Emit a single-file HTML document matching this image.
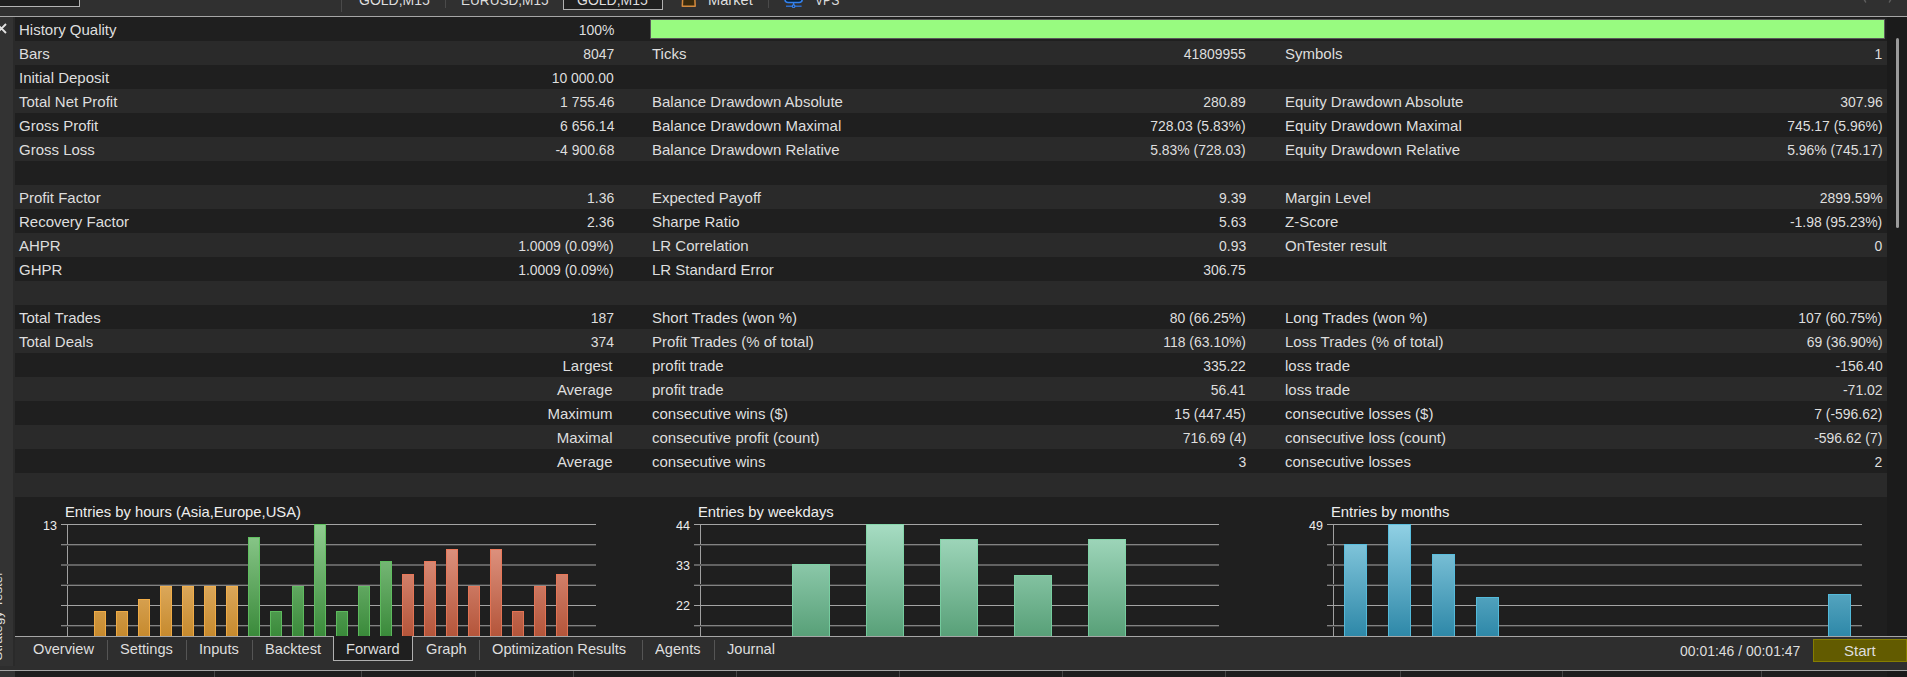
<!DOCTYPE html>
<html><head><meta charset="utf-8"><style>
html,body{margin:0;padding:0}
body{width:1907px;height:677px;overflow:hidden;position:relative;background:#1e1e1e;font-family:"Liberation Sans", sans-serif}
body>div,body>span,body>svg{position:absolute}
.t{white-space:nowrap;display:block}
</style></head><body>
<div style="left:0px;top:0px;width:1907px;height:16px;background:#303030;"></div>
<div style="left:0px;top:16px;width:1907px;height:1px;background:#a6a6a6;"></div>
<div style="left:0px;top:0px;width:79px;height:6px;background:#1f1f1f;border-right:1px solid #b4b4b4;border-bottom:1px solid #b4b4b4;"></div>
<div style="left:341px;top:0px;width:1px;height:12px;background:#4a4a4a;"></div>
<div style="left:445px;top:0px;width:1px;height:8px;background:#4a4a4a;"></div>
<div style="left:768px;top:0px;width:1px;height:8px;background:#4a4a4a;"></div>
<div style="left:563px;top:0px;width:100px;height:10px;background:#1f1f1f;box-sizing:border-box;border:1px solid #b0b0b0;border-top:none;"></div>
<div style="left:0px;top:17px;width:13px;height:649px;background:#333333;"></div>
<div style="left:13px;top:17px;width:2px;height:649px;background:#2a2a2a;"></div>
<div style="left:1887px;top:17px;width:20px;height:619px;background:#1b1b1b;"></div>
<div style="left:1896px;top:38px;width:3px;height:190px;background:#9a9a9a;border-radius:1.5px;"></div>
<div style="left:15px;top:17px;width:1872px;height:24px;background:#1f1f1f;"></div>
<div style="left:15px;top:41px;width:1872px;height:24px;background:#2a2a2a;"></div>
<div style="left:15px;top:65px;width:1872px;height:24px;background:#1f1f1f;"></div>
<div style="left:15px;top:89px;width:1872px;height:24px;background:#2a2a2a;"></div>
<div style="left:15px;top:113px;width:1872px;height:24px;background:#1f1f1f;"></div>
<div style="left:15px;top:137px;width:1872px;height:24px;background:#2a2a2a;"></div>
<div style="left:15px;top:161px;width:1872px;height:24px;background:#1f1f1f;"></div>
<div style="left:15px;top:185px;width:1872px;height:24px;background:#2a2a2a;"></div>
<div style="left:15px;top:209px;width:1872px;height:24px;background:#1f1f1f;"></div>
<div style="left:15px;top:233px;width:1872px;height:24px;background:#2a2a2a;"></div>
<div style="left:15px;top:257px;width:1872px;height:24px;background:#1f1f1f;"></div>
<div style="left:15px;top:281px;width:1872px;height:24px;background:#2a2a2a;"></div>
<div style="left:15px;top:305px;width:1872px;height:24px;background:#1f1f1f;"></div>
<div style="left:15px;top:329px;width:1872px;height:24px;background:#2a2a2a;"></div>
<div style="left:15px;top:353px;width:1872px;height:24px;background:#1f1f1f;"></div>
<div style="left:15px;top:377px;width:1872px;height:24px;background:#2a2a2a;"></div>
<div style="left:15px;top:401px;width:1872px;height:24px;background:#1f1f1f;"></div>
<div style="left:15px;top:425px;width:1872px;height:24px;background:#2a2a2a;"></div>
<div style="left:15px;top:449px;width:1872px;height:24px;background:#1f1f1f;"></div>
<div style="left:15px;top:473px;width:1872px;height:24px;background:#2a2a2a;"></div>
<div style="left:650px;top:19px;width:1235px;height:20px;background:#98fb80;box-sizing:border-box;border:1px solid #5a5a5a;"></div>
<span class="t" style="left:19px;top:19.80px;font-size:15px;line-height:20px;color:#dedede;">History Quality</span>
<span class="t" style="right:1293px;top:19.80px;font-size:15px;line-height:20px;color:#dedede;transform:scaleX(0.93);transform-origin:right center;">100%</span>
<span class="t" style="left:19px;top:43.80px;font-size:15px;line-height:20px;color:#dedede;">Bars</span>
<span class="t" style="right:1293px;top:43.80px;font-size:15px;line-height:20px;color:#dedede;transform:scaleX(0.93);transform-origin:right center;">8047</span>
<span class="t" style="left:652px;top:43.80px;font-size:15px;line-height:20px;color:#dedede;">Ticks</span>
<span class="t" style="right:661px;top:43.80px;font-size:15px;line-height:20px;color:#dedede;transform:scaleX(0.93);transform-origin:right center;">41809955</span>
<span class="t" style="left:1285px;top:43.80px;font-size:15px;line-height:20px;color:#dedede;">Symbols</span>
<span class="t" style="right:24.5px;top:43.80px;font-size:15px;line-height:20px;color:#dedede;transform:scaleX(0.93);transform-origin:right center;">1</span>
<span class="t" style="left:19px;top:67.80px;font-size:15px;line-height:20px;color:#dedede;">Initial Deposit</span>
<span class="t" style="right:1293px;top:67.80px;font-size:15px;line-height:20px;color:#dedede;transform:scaleX(0.93);transform-origin:right center;">10 000.00</span>
<span class="t" style="left:19px;top:91.80px;font-size:15px;line-height:20px;color:#dedede;">Total Net Profit</span>
<span class="t" style="right:1293px;top:91.80px;font-size:15px;line-height:20px;color:#dedede;transform:scaleX(0.93);transform-origin:right center;">1 755.46</span>
<span class="t" style="left:652px;top:91.80px;font-size:15px;line-height:20px;color:#dedede;">Balance Drawdown Absolute</span>
<span class="t" style="right:661px;top:91.80px;font-size:15px;line-height:20px;color:#dedede;transform:scaleX(0.93);transform-origin:right center;">280.89</span>
<span class="t" style="left:1285px;top:91.80px;font-size:15px;line-height:20px;color:#dedede;">Equity Drawdown Absolute</span>
<span class="t" style="right:24.5px;top:91.80px;font-size:15px;line-height:20px;color:#dedede;transform:scaleX(0.93);transform-origin:right center;">307.96</span>
<span class="t" style="left:19px;top:115.80px;font-size:15px;line-height:20px;color:#dedede;">Gross Profit</span>
<span class="t" style="right:1293px;top:115.80px;font-size:15px;line-height:20px;color:#dedede;transform:scaleX(0.93);transform-origin:right center;">6 656.14</span>
<span class="t" style="left:652px;top:115.80px;font-size:15px;line-height:20px;color:#dedede;">Balance Drawdown Maximal</span>
<span class="t" style="right:661px;top:115.80px;font-size:15px;line-height:20px;color:#dedede;transform:scaleX(0.93);transform-origin:right center;">728.03 (5.83%)</span>
<span class="t" style="left:1285px;top:115.80px;font-size:15px;line-height:20px;color:#dedede;">Equity Drawdown Maximal</span>
<span class="t" style="right:24.5px;top:115.80px;font-size:15px;line-height:20px;color:#dedede;transform:scaleX(0.93);transform-origin:right center;">745.17 (5.96%)</span>
<span class="t" style="left:19px;top:139.80px;font-size:15px;line-height:20px;color:#dedede;">Gross Loss</span>
<span class="t" style="right:1293px;top:139.80px;font-size:15px;line-height:20px;color:#dedede;transform:scaleX(0.93);transform-origin:right center;">-4 900.68</span>
<span class="t" style="left:652px;top:139.80px;font-size:15px;line-height:20px;color:#dedede;">Balance Drawdown Relative</span>
<span class="t" style="right:661px;top:139.80px;font-size:15px;line-height:20px;color:#dedede;transform:scaleX(0.93);transform-origin:right center;">5.83% (728.03)</span>
<span class="t" style="left:1285px;top:139.80px;font-size:15px;line-height:20px;color:#dedede;">Equity Drawdown Relative</span>
<span class="t" style="right:24.5px;top:139.80px;font-size:15px;line-height:20px;color:#dedede;transform:scaleX(0.93);transform-origin:right center;">5.96% (745.17)</span>
<span class="t" style="left:19px;top:187.80px;font-size:15px;line-height:20px;color:#dedede;">Profit Factor</span>
<span class="t" style="right:1293px;top:187.80px;font-size:15px;line-height:20px;color:#dedede;transform:scaleX(0.93);transform-origin:right center;">1.36</span>
<span class="t" style="left:652px;top:187.80px;font-size:15px;line-height:20px;color:#dedede;">Expected Payoff</span>
<span class="t" style="right:661px;top:187.80px;font-size:15px;line-height:20px;color:#dedede;transform:scaleX(0.93);transform-origin:right center;">9.39</span>
<span class="t" style="left:1285px;top:187.80px;font-size:15px;line-height:20px;color:#dedede;">Margin Level</span>
<span class="t" style="right:24.5px;top:187.80px;font-size:15px;line-height:20px;color:#dedede;transform:scaleX(0.93);transform-origin:right center;">2899.59%</span>
<span class="t" style="left:19px;top:211.80px;font-size:15px;line-height:20px;color:#dedede;">Recovery Factor</span>
<span class="t" style="right:1293px;top:211.80px;font-size:15px;line-height:20px;color:#dedede;transform:scaleX(0.93);transform-origin:right center;">2.36</span>
<span class="t" style="left:652px;top:211.80px;font-size:15px;line-height:20px;color:#dedede;">Sharpe Ratio</span>
<span class="t" style="right:661px;top:211.80px;font-size:15px;line-height:20px;color:#dedede;transform:scaleX(0.93);transform-origin:right center;">5.63</span>
<span class="t" style="left:1285px;top:211.80px;font-size:15px;line-height:20px;color:#dedede;">Z-Score</span>
<span class="t" style="right:24.5px;top:211.80px;font-size:15px;line-height:20px;color:#dedede;transform:scaleX(0.93);transform-origin:right center;">-1.98 (95.23%)</span>
<span class="t" style="left:19px;top:235.80px;font-size:15px;line-height:20px;color:#dedede;">AHPR</span>
<span class="t" style="right:1293px;top:235.80px;font-size:15px;line-height:20px;color:#dedede;transform:scaleX(0.93);transform-origin:right center;">1.0009 (0.09%)</span>
<span class="t" style="left:652px;top:235.80px;font-size:15px;line-height:20px;color:#dedede;">LR Correlation</span>
<span class="t" style="right:661px;top:235.80px;font-size:15px;line-height:20px;color:#dedede;transform:scaleX(0.93);transform-origin:right center;">0.93</span>
<span class="t" style="left:1285px;top:235.80px;font-size:15px;line-height:20px;color:#dedede;">OnTester result</span>
<span class="t" style="right:24.5px;top:235.80px;font-size:15px;line-height:20px;color:#dedede;transform:scaleX(0.93);transform-origin:right center;">0</span>
<span class="t" style="left:19px;top:259.80px;font-size:15px;line-height:20px;color:#dedede;">GHPR</span>
<span class="t" style="right:1293px;top:259.80px;font-size:15px;line-height:20px;color:#dedede;transform:scaleX(0.93);transform-origin:right center;">1.0009 (0.09%)</span>
<span class="t" style="left:652px;top:259.80px;font-size:15px;line-height:20px;color:#dedede;">LR Standard Error</span>
<span class="t" style="right:661px;top:259.80px;font-size:15px;line-height:20px;color:#dedede;transform:scaleX(0.93);transform-origin:right center;">306.75</span>
<span class="t" style="left:19px;top:307.80px;font-size:15px;line-height:20px;color:#dedede;">Total Trades</span>
<span class="t" style="right:1293px;top:307.80px;font-size:15px;line-height:20px;color:#dedede;transform:scaleX(0.93);transform-origin:right center;">187</span>
<span class="t" style="left:652px;top:307.80px;font-size:15px;line-height:20px;color:#dedede;">Short Trades (won %)</span>
<span class="t" style="right:661px;top:307.80px;font-size:15px;line-height:20px;color:#dedede;transform:scaleX(0.93);transform-origin:right center;">80 (66.25%)</span>
<span class="t" style="left:1285px;top:307.80px;font-size:15px;line-height:20px;color:#dedede;">Long Trades (won %)</span>
<span class="t" style="right:24.5px;top:307.80px;font-size:15px;line-height:20px;color:#dedede;transform:scaleX(0.93);transform-origin:right center;">107 (60.75%)</span>
<span class="t" style="left:19px;top:331.80px;font-size:15px;line-height:20px;color:#dedede;">Total Deals</span>
<span class="t" style="right:1293px;top:331.80px;font-size:15px;line-height:20px;color:#dedede;transform:scaleX(0.93);transform-origin:right center;">374</span>
<span class="t" style="left:652px;top:331.80px;font-size:15px;line-height:20px;color:#dedede;">Profit Trades (% of total)</span>
<span class="t" style="right:661px;top:331.80px;font-size:15px;line-height:20px;color:#dedede;transform:scaleX(0.93);transform-origin:right center;">118 (63.10%)</span>
<span class="t" style="left:1285px;top:331.80px;font-size:15px;line-height:20px;color:#dedede;">Loss Trades (% of total)</span>
<span class="t" style="right:24.5px;top:331.80px;font-size:15px;line-height:20px;color:#dedede;transform:scaleX(0.93);transform-origin:right center;">69 (36.90%)</span>
<span class="t" style="right:1294.5px;top:355.80px;font-size:15px;line-height:20px;color:#dedede;">Largest</span>
<span class="t" style="left:652px;top:355.80px;font-size:15px;line-height:20px;color:#dedede;">profit trade</span>
<span class="t" style="right:661px;top:355.80px;font-size:15px;line-height:20px;color:#dedede;transform:scaleX(0.93);transform-origin:right center;">335.22</span>
<span class="t" style="left:1285px;top:355.80px;font-size:15px;line-height:20px;color:#dedede;">loss trade</span>
<span class="t" style="right:24.5px;top:355.80px;font-size:15px;line-height:20px;color:#dedede;transform:scaleX(0.93);transform-origin:right center;">-156.40</span>
<span class="t" style="right:1294.5px;top:379.80px;font-size:15px;line-height:20px;color:#dedede;">Average</span>
<span class="t" style="left:652px;top:379.80px;font-size:15px;line-height:20px;color:#dedede;">profit trade</span>
<span class="t" style="right:661px;top:379.80px;font-size:15px;line-height:20px;color:#dedede;transform:scaleX(0.93);transform-origin:right center;">56.41</span>
<span class="t" style="left:1285px;top:379.80px;font-size:15px;line-height:20px;color:#dedede;">loss trade</span>
<span class="t" style="right:24.5px;top:379.80px;font-size:15px;line-height:20px;color:#dedede;transform:scaleX(0.93);transform-origin:right center;">-71.02</span>
<span class="t" style="right:1294.5px;top:403.80px;font-size:15px;line-height:20px;color:#dedede;">Maximum</span>
<span class="t" style="left:652px;top:403.80px;font-size:15px;line-height:20px;color:#dedede;">consecutive wins ($)</span>
<span class="t" style="right:661px;top:403.80px;font-size:15px;line-height:20px;color:#dedede;transform:scaleX(0.93);transform-origin:right center;">15 (447.45)</span>
<span class="t" style="left:1285px;top:403.80px;font-size:15px;line-height:20px;color:#dedede;">consecutive losses ($)</span>
<span class="t" style="right:24.5px;top:403.80px;font-size:15px;line-height:20px;color:#dedede;transform:scaleX(0.93);transform-origin:right center;">7 (-596.62)</span>
<span class="t" style="right:1294.5px;top:427.80px;font-size:15px;line-height:20px;color:#dedede;">Maximal</span>
<span class="t" style="left:652px;top:427.80px;font-size:15px;line-height:20px;color:#dedede;">consecutive profit (count)</span>
<span class="t" style="right:661px;top:427.80px;font-size:15px;line-height:20px;color:#dedede;transform:scaleX(0.93);transform-origin:right center;">716.69 (4)</span>
<span class="t" style="left:1285px;top:427.80px;font-size:15px;line-height:20px;color:#dedede;">consecutive loss (count)</span>
<span class="t" style="right:24.5px;top:427.80px;font-size:15px;line-height:20px;color:#dedede;transform:scaleX(0.93);transform-origin:right center;">-596.62 (7)</span>
<span class="t" style="right:1294.5px;top:451.80px;font-size:15px;line-height:20px;color:#dedede;">Average</span>
<span class="t" style="left:652px;top:451.80px;font-size:15px;line-height:20px;color:#dedede;">consecutive wins</span>
<span class="t" style="right:661px;top:451.80px;font-size:15px;line-height:20px;color:#dedede;transform:scaleX(0.93);transform-origin:right center;">3</span>
<span class="t" style="left:1285px;top:451.80px;font-size:15px;line-height:20px;color:#dedede;">consecutive losses</span>
<span class="t" style="right:24.5px;top:451.80px;font-size:15px;line-height:20px;color:#dedede;transform:scaleX(0.93);transform-origin:right center;">2</span>
<div style="left:15px;top:497px;width:1872px;height:139px;background:#1f1f1f;"></div>
<div style="left:67px;top:524px;width:1px;height:112px;background:#a0a0a0"></div>
<div style="left:61px;top:524px;width:535px;height:1px;background:#a4a4a4;"></div>
<div style="left:61px;top:544px;width:535px;height:1px;background:#838383;"></div>
<div style="left:61px;top:545px;width:535px;height:1px;background:#404040;"></div>
<div style="left:61px;top:564px;width:535px;height:1px;background:#626262;"></div>
<div style="left:61px;top:565px;width:535px;height:1px;background:#626262;"></div>
<div style="left:61px;top:584px;width:535px;height:1px;background:#404040;"></div>
<div style="left:61px;top:585px;width:535px;height:1px;background:#838383;"></div>
<div style="left:61px;top:605px;width:535px;height:1px;background:#a4a4a4;"></div>
<div style="left:61px;top:625px;width:535px;height:1px;background:#838383;"></div>
<div style="left:61px;top:626px;width:535px;height:1px;background:#404040;"></div>
<span class="t" style="left:65px;top:501.87px;font-size:14.8px;line-height:20px;color:#eeeeee;">Entries by hours (Asia,Europe,USA)</span>
<span class="t" style="right:1850px;top:516.17px;font-size:12.5px;line-height:20px;color:#eeeeee;">13</span>
<div style="left:94px;top:611px;width:12px;height:25px;background:linear-gradient(#f0ac45,#eea840);"><div style="position:absolute;left:1px;top:1px;right:1px;bottom:0;background:linear-gradient(#d09843,#c68a2e)"></div></div>
<div style="left:116px;top:611px;width:12px;height:25px;background:linear-gradient(#f0ac45,#eea840);"><div style="position:absolute;left:1px;top:1px;right:1px;bottom:0;background:linear-gradient(#d09843,#c68a2e)"></div></div>
<div style="left:138px;top:599px;width:12px;height:37px;background:linear-gradient(#f1ad48,#eea840);"><div style="position:absolute;left:1px;top:1px;right:1px;bottom:0;background:linear-gradient(#d59f4e,#c68a2e)"></div></div>
<div style="left:160px;top:586px;width:12px;height:50px;background:linear-gradient(#f2af4b,#eea840);"><div style="position:absolute;left:1px;top:1px;right:1px;bottom:0;background:linear-gradient(#dba759,#c68a2e)"></div></div>
<div style="left:182px;top:586px;width:12px;height:50px;background:linear-gradient(#f2af4b,#eea840);"><div style="position:absolute;left:1px;top:1px;right:1px;bottom:0;background:linear-gradient(#dba759,#c68a2e)"></div></div>
<div style="left:204px;top:586px;width:12px;height:50px;background:linear-gradient(#f2af4b,#eea840);"><div style="position:absolute;left:1px;top:1px;right:1px;bottom:0;background:linear-gradient(#dba759,#c68a2e)"></div></div>
<div style="left:226px;top:586px;width:12px;height:50px;background:linear-gradient(#f2af4b,#eea840);"><div style="position:absolute;left:1px;top:1px;right:1px;bottom:0;background:linear-gradient(#dba759,#c68a2e)"></div></div>
<div style="left:248px;top:537px;width:12px;height:99px;background:linear-gradient(#61c161,#5cb85c);"><div style="position:absolute;left:1px;top:1px;right:1px;bottom:0;background:linear-gradient(#86c486,#3a8a3a)"></div></div>
<div style="left:270px;top:611px;width:12px;height:25px;background:linear-gradient(#5dba5d,#5cb85c);"><div style="position:absolute;left:1px;top:1px;right:1px;bottom:0;background:linear-gradient(#4d994d,#3a8a3a)"></div></div>
<div style="left:292px;top:586px;width:12px;height:50px;background:linear-gradient(#5fbc5f,#5cb85c);"><div style="position:absolute;left:1px;top:1px;right:1px;bottom:0;background:linear-gradient(#60a760,#3a8a3a)"></div></div>
<div style="left:314px;top:524px;width:12px;height:112px;background:linear-gradient(#62c262,#5cb85c);"><div style="position:absolute;left:1px;top:1px;right:1px;bottom:0;background:linear-gradient(#90cc90,#3a8a3a)"></div></div>
<div style="left:336px;top:611px;width:12px;height:25px;background:linear-gradient(#5dba5d,#5cb85c);"><div style="position:absolute;left:1px;top:1px;right:1px;bottom:0;background:linear-gradient(#4d994d,#3a8a3a)"></div></div>
<div style="left:358px;top:586px;width:12px;height:50px;background:linear-gradient(#5fbc5f,#5cb85c);"><div style="position:absolute;left:1px;top:1px;right:1px;bottom:0;background:linear-gradient(#60a760,#3a8a3a)"></div></div>
<div style="left:380px;top:561px;width:12px;height:75px;background:linear-gradient(#60bf60,#5cb85c);"><div style="position:absolute;left:1px;top:1px;right:1px;bottom:0;background:linear-gradient(#74b674,#3a8a3a)"></div></div>
<div style="left:402px;top:574px;width:12px;height:62px;background:linear-gradient(#e87758,#e07050);"><div style="position:absolute;left:1px;top:1px;right:1px;bottom:0;background:linear-gradient(#d17f69,#b4553a)"></div></div>
<div style="left:424px;top:561px;width:12px;height:75px;background:linear-gradient(#e97859,#e07050);"><div style="position:absolute;left:1px;top:1px;right:1px;bottom:0;background:linear-gradient(#d78873,#b4553a)"></div></div>
<div style="left:446px;top:549px;width:12px;height:87px;background:linear-gradient(#eb795b,#e07050);"><div style="position:absolute;left:1px;top:1px;right:1px;bottom:0;background:linear-gradient(#dc907c,#b4553a)"></div></div>
<div style="left:468px;top:586px;width:12px;height:50px;background:linear-gradient(#e67556,#e07050);"><div style="position:absolute;left:1px;top:1px;right:1px;bottom:0;background:linear-gradient(#cb7760,#b4553a)"></div></div>
<div style="left:490px;top:549px;width:12px;height:87px;background:linear-gradient(#eb795b,#e07050);"><div style="position:absolute;left:1px;top:1px;right:1px;bottom:0;background:linear-gradient(#dc907c,#b4553a)"></div></div>
<div style="left:512px;top:611px;width:12px;height:25px;background:linear-gradient(#e37353,#e07050);"><div style="position:absolute;left:1px;top:1px;right:1px;bottom:0;background:linear-gradient(#c0664d,#b4553a)"></div></div>
<div style="left:534px;top:586px;width:12px;height:50px;background:linear-gradient(#e67556,#e07050);"><div style="position:absolute;left:1px;top:1px;right:1px;bottom:0;background:linear-gradient(#cb7760,#b4553a)"></div></div>
<div style="left:556px;top:574px;width:12px;height:62px;background:linear-gradient(#e87758,#e07050);"><div style="position:absolute;left:1px;top:1px;right:1px;bottom:0;background:linear-gradient(#d17f69,#b4553a)"></div></div>
<div style="left:700px;top:524px;width:1px;height:112px;background:#a0a0a0"></div>
<div style="left:694px;top:524px;width:525px;height:1px;background:#a4a4a4;"></div>
<div style="left:694px;top:544px;width:525px;height:1px;background:#838383;"></div>
<div style="left:694px;top:545px;width:525px;height:1px;background:#404040;"></div>
<div style="left:694px;top:564px;width:525px;height:1px;background:#626262;"></div>
<div style="left:694px;top:565px;width:525px;height:1px;background:#626262;"></div>
<div style="left:694px;top:584px;width:525px;height:1px;background:#404040;"></div>
<div style="left:694px;top:585px;width:525px;height:1px;background:#838383;"></div>
<div style="left:694px;top:605px;width:525px;height:1px;background:#a4a4a4;"></div>
<div style="left:694px;top:625px;width:525px;height:1px;background:#838383;"></div>
<div style="left:694px;top:626px;width:525px;height:1px;background:#404040;"></div>
<span class="t" style="left:698px;top:501.87px;font-size:14.8px;line-height:20px;color:#eeeeee;">Entries by weekdays</span>
<span class="t" style="right:1217px;top:516.17px;font-size:12.5px;line-height:20px;color:#eeeeee;">44</span>
<span class="t" style="right:1217px;top:556.17px;font-size:12.5px;line-height:20px;color:#eeeeee;">33</span>
<span class="t" style="right:1217px;top:596.17px;font-size:12.5px;line-height:20px;color:#eeeeee;">22</span>
<div style="left:792px;top:564px;width:38px;height:72px;background:linear-gradient(#7ed2a6,#70c89a);"><div style="position:absolute;left:1px;top:1px;right:1px;bottom:0;background:linear-gradient(#8ac7a8,#58a078)"></div></div>
<div style="left:866px;top:524px;width:38px;height:112px;background:linear-gradient(#86d8ac,#70c89a);"><div style="position:absolute;left:1px;top:1px;right:1px;bottom:0;background:linear-gradient(#a6dcc2,#58a078)"></div></div>
<div style="left:940px;top:539px;width:38px;height:97px;background:linear-gradient(#83d6aa,#70c89a);"><div style="position:absolute;left:1px;top:1px;right:1px;bottom:0;background:linear-gradient(#9cd4b8,#58a078)"></div></div>
<div style="left:1014px;top:575px;width:38px;height:61px;background:linear-gradient(#7cd1a4,#70c89a);"><div style="position:absolute;left:1px;top:1px;right:1px;bottom:0;background:linear-gradient(#82c1a0,#58a078)"></div></div>
<div style="left:1088px;top:539px;width:38px;height:97px;background:linear-gradient(#83d6aa,#70c89a);"><div style="position:absolute;left:1px;top:1px;right:1px;bottom:0;background:linear-gradient(#9cd4b8,#58a078)"></div></div>
<div style="left:1333px;top:524px;width:1px;height:112px;background:#a0a0a0"></div>
<div style="left:1327px;top:524px;width:535px;height:1px;background:#a4a4a4;"></div>
<div style="left:1327px;top:544px;width:535px;height:1px;background:#838383;"></div>
<div style="left:1327px;top:545px;width:535px;height:1px;background:#404040;"></div>
<div style="left:1327px;top:564px;width:535px;height:1px;background:#626262;"></div>
<div style="left:1327px;top:565px;width:535px;height:1px;background:#626262;"></div>
<div style="left:1327px;top:584px;width:535px;height:1px;background:#404040;"></div>
<div style="left:1327px;top:585px;width:535px;height:1px;background:#838383;"></div>
<div style="left:1327px;top:605px;width:535px;height:1px;background:#a4a4a4;"></div>
<div style="left:1327px;top:625px;width:535px;height:1px;background:#838383;"></div>
<div style="left:1327px;top:626px;width:535px;height:1px;background:#404040;"></div>
<span class="t" style="left:1331px;top:501.87px;font-size:14.8px;line-height:20px;color:#eeeeee;">Entries by months</span>
<span class="t" style="right:584px;top:516.17px;font-size:12.5px;line-height:20px;color:#eeeeee;">49</span>
<div style="left:1344px;top:544px;width:23px;height:92px;background:linear-gradient(#5abfdf,#50b8d8);"><div style="position:absolute;left:1px;top:1px;right:1px;bottom:0;background:linear-gradient(#7ec3d9,#2e88a8)"></div></div>
<div style="left:1388px;top:524px;width:23px;height:112px;background:linear-gradient(#5cc0e0,#50b8d8);"><div style="position:absolute;left:1px;top:1px;right:1px;bottom:0;background:linear-gradient(#90d0e4,#2e88a8)"></div></div>
<div style="left:1432px;top:554px;width:23px;height:82px;background:linear-gradient(#59bede,#50b8d8);"><div style="position:absolute;left:1px;top:1px;right:1px;bottom:0;background:linear-gradient(#76bdd4,#2e88a8)"></div></div>
<div style="left:1476px;top:597px;width:23px;height:39px;background:linear-gradient(#54bbdb,#50b8d8);"><div style="position:absolute;left:1px;top:1px;right:1px;bottom:0;background:linear-gradient(#50a1bd,#2e88a8)"></div></div>
<div style="left:1828px;top:594px;width:23px;height:42px;background:linear-gradient(#54bbdb,#50b8d8);"><div style="position:absolute;left:1px;top:1px;right:1px;bottom:0;background:linear-gradient(#53a3be,#2e88a8)"></div></div>
<div style="left:15px;top:636px;width:1892px;height:1px;background:#a6a6a6;"></div>
<div style="left:15px;top:637px;width:1892px;height:33px;background:#2e2e2e;"></div>
<div style="left:0px;top:670px;width:1907px;height:1px;background:#a6a6a6;"></div>
<div style="left:0px;top:671px;width:1907px;height:6px;background:#1e1e1e;"></div>
<div style="left:0px;top:666px;width:15px;height:4px;background:#2e2e2e;"></div>
<div style="left:0px;top:671px;width:15px;height:6px;background:#333333;"></div>
<div style="left:214px;top:671px;width:1px;height:6px;background:#444444;"></div>
<div style="left:361px;top:671px;width:1px;height:6px;background:#444444;"></div>
<div style="left:475px;top:671px;width:1px;height:6px;background:#444444;"></div>
<div style="left:573px;top:671px;width:1px;height:6px;background:#444444;"></div>
<div style="left:736px;top:671px;width:1px;height:6px;background:#444444;"></div>
<div style="left:899px;top:671px;width:1px;height:6px;background:#444444;"></div>
<div style="left:1062px;top:671px;width:1px;height:6px;background:#444444;"></div>
<div style="left:1225px;top:671px;width:1px;height:6px;background:#444444;"></div>
<div style="left:1400px;top:671px;width:1px;height:6px;background:#444444;"></div>
<div style="left:1562px;top:671px;width:1px;height:6px;background:#444444;"></div>
<div style="left:1761px;top:671px;width:1px;height:6px;background:#444444;"></div>
<div style="left:333px;top:636px;width:80px;height:25px;background:#1f1f1f;box-sizing:border-box;border:1px solid #b0b0b0;border-top:none;"></div>
<div style="left:107px;top:640px;width:1px;height:20px;background:#555555;"></div>
<div style="left:186px;top:640px;width:1px;height:20px;background:#555555;"></div>
<div style="left:252px;top:640px;width:1px;height:20px;background:#555555;"></div>
<div style="left:479px;top:640px;width:1px;height:20px;background:#555555;"></div>
<div style="left:642px;top:640px;width:1px;height:20px;background:#555555;"></div>
<div style="left:714px;top:640px;width:1px;height:20px;background:#555555;"></div>
<span class="t" style="left:33px;top:638.80px;font-size:15px;line-height:20px;color:#dedede;transform:scaleX(0.975);transform-origin:left center;">Overview</span>
<span class="t" style="left:120px;top:638.80px;font-size:15px;line-height:20px;color:#dedede;transform:scaleX(0.975);transform-origin:left center;">Settings</span>
<span class="t" style="left:199px;top:638.80px;font-size:15px;line-height:20px;color:#dedede;transform:scaleX(0.975);transform-origin:left center;">Inputs</span>
<span class="t" style="left:265px;top:638.80px;font-size:15px;line-height:20px;color:#dedede;transform:scaleX(0.975);transform-origin:left center;">Backtest</span>
<span class="t" style="left:346px;top:638.80px;font-size:15px;line-height:20px;color:#dedede;transform:scaleX(0.975);transform-origin:left center;">Forward</span>
<span class="t" style="left:426px;top:638.80px;font-size:15px;line-height:20px;color:#dedede;transform:scaleX(0.975);transform-origin:left center;">Graph</span>
<span class="t" style="left:492px;top:638.80px;font-size:15px;line-height:20px;color:#dedede;transform:scaleX(0.975);transform-origin:left center;">Optimization Results</span>
<span class="t" style="left:655px;top:638.80px;font-size:15px;line-height:20px;color:#dedede;transform:scaleX(0.975);transform-origin:left center;">Agents</span>
<span class="t" style="left:727px;top:638.80px;font-size:15px;line-height:20px;color:#dedede;transform:scaleX(0.975);transform-origin:left center;">Journal</span>
<span class="t" style="right:107px;top:640.80px;font-size:15px;line-height:20px;color:#dedede;transform:scaleX(0.93);transform-origin:right center;">00:01:46 / 00:01:47</span>
<div style="left:1813px;top:639px;width:94px;height:23px;background:#625b00;box-sizing:border-box;border:1px solid #857d00;"></div>
<span class="t" style="left:1844px;top:641.30px;font-size:15px;line-height:20px;color:#dedede;">Start</span>
<div style="left:1887px;top:671px;width:20px;height:6px;background:#1a1a1a;"></div>
<span class="t" style="left:359px;top:-10.20px;font-size:15px;line-height:20px;color:#dedede;transform:scaleX(0.933);transform-origin:left center;">GOLD,M15</span>
<span class="t" style="left:461px;top:-10.20px;font-size:15px;line-height:20px;color:#dedede;transform:scaleX(0.905);transform-origin:left center;">EURUSD,M15</span>
<span class="t" style="left:577px;top:-10.20px;font-size:15px;line-height:20px;color:#dedede;transform:scaleX(0.933);transform-origin:left center;">GOLD,M15</span>
<span class="t" style="left:707.5px;top:-10.20px;font-size:15px;line-height:20px;color:#dedede;transform:scaleX(0.975);transform-origin:left center;">Market</span>
<span class="t" style="left:815px;top:-10.20px;font-size:15px;line-height:20px;color:#dedede;transform:scaleX(0.81);transform-origin:left center;">VPS</span>
<svg style="position:absolute;left:676px;top:-4px" width="26" height="14" viewBox="676 -4 26 14"><path d="M682.8 -4 L682.3 6.2 L695.2 6.2 L694.7 -4 Z" fill="#3a2a0c" stroke="#d58b3e" stroke-width="1.5" stroke-linejoin="round"/></svg>
<svg style="position:absolute;left:780px;top:-8px" width="28" height="18" viewBox="780 -8 28 18"><rect x="785" y="-6" width="17.2" height="8.4" rx="3" fill="#06223c" stroke="#3582ee" stroke-width="1.5"/><path d="M793.6 2.5 V5.2" stroke="#3582ee" stroke-width="1.4"/><path d="M786 6.2 H792.2 M795 6.2 H801.6" stroke="#2f6cc8" stroke-width="1.4"/><circle cx="793.6" cy="6.2" r="1.3" fill="#17314f" stroke="#3582ee" stroke-width="1.2"/></svg>
<svg style="position:absolute;left:1855px;top:0" width="45" height="6" viewBox="1855 0 45 6"><path d="M1863.6 -1.5 L1865.6 2 M1891.4 -1.5 L1889.4 2" stroke="#5e5e5e" stroke-width="1.5" stroke-linecap="round"/></svg>
<svg style="position:absolute;left:-4px;top:23px" width="12" height="12" viewBox="0 0 12 12"><path d="M1 1L10 10M10 1L1 10" stroke="#e4e4e4" stroke-width="1.9"/></svg>
<span class="t" style="left:-47px;top:607.5px;width:90px;font-size:13.3px;line-height:16px;color:#dedede;transform:rotate(-90deg);transform-origin:center;text-align:center">Strategy Tester</span>
</body></html>
